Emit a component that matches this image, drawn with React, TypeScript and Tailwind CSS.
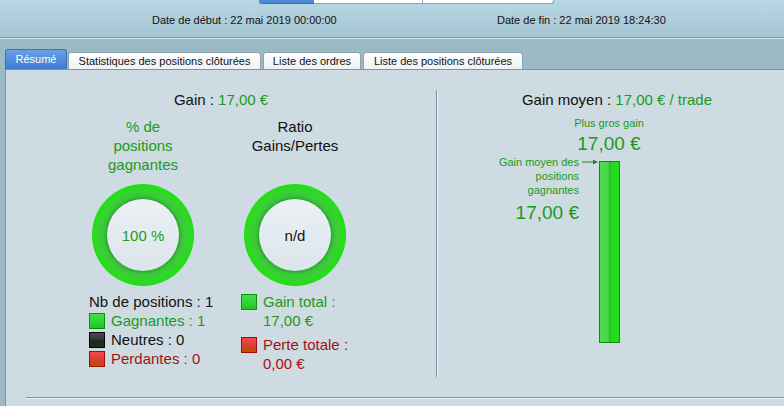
import type { ReactNode } from "react";

const green = "text-[#1a9a1a]";
const red = "text-[#a31212]";

function Swatch({ tone }: { tone: "green" | "black" | "red" }) {
  const styles = {
    green: "border-[#0c930c] bg-[linear-gradient(#46de46_0%,#32d232_55%,#22c222_100%)]",
    black: "border-[#050505] bg-[linear-gradient(#4a4a4a_0%,#333_50%,#1d2d1d_55%,#1a331a_100%)]",
    red: "border-[#a00c0c] bg-[linear-gradient(#f04a4a_0%,#e23c3c_50%,#cf4418_55%,#c8480c_100%)]",
  };
  return <span className={`block h-[16px] w-[16px] shrink-0 border ${styles[tone]}`} />;
}

function Ring({ children }: { children: ReactNode }) {
  return (
    <div className="mx-auto flex h-[102px] w-[102px] items-center justify-center rounded-full bg-[radial-gradient(circle_closest-side,#30b630_70%,#3cc63c_78%,#34d52e_88%,#20e012_100%)]">
      <div className="flex h-[72px] w-[72px] items-center justify-center rounded-full bg-[linear-gradient(#ebf1f5,#dce5eb)] text-[15px] shadow-[0_0_3px_rgba(0,70,0,0.4)]">
        {children}
      </div>
    </div>
  );
}

export default function App() {
  return (
    <div className="flex h-[406px] w-[784px] flex-col overflow-hidden bg-[#9cbac6] font-['Liberation_Sans',Arial,sans-serif] text-[#111]">
      {/* top bar with dates */}
      <div className="h-[37px] shrink-0 bg-[linear-gradient(#b9d8e5,#a5c4d1)]">
        <div className="ml-[259px] flex h-[4px]">
          <div className="w-[55px] rounded-bl-[3px] border-b border-[#3a6fb6] bg-[#4a88da]" />
          <div className="w-[109px] border-b border-r border-[#8ea3ae] bg-white" />
          <div className="w-[131px] rounded-br-[3px] border-b border-r border-[#8ea3ae] bg-white" />
        </div>
        <div className="mt-[10px] flex text-[11px] leading-[13px]">
          <span className="ml-[152px] w-[345px]">Date de début : 22 mai 2019 00:00:00</span>
          <span>Date de fin : 22 mai 2019 18:24:30</span>
        </div>
      </div>
      <div className="h-[1px] shrink-0 bg-[#7f9aa7]" />
      <div className="h-[1px] shrink-0 bg-[#d6e6ed]" />

      {/* tabs */}
      <div className="flex h-[30px] shrink-0 items-end gap-[1px] pl-[5px] text-[11px]">
        <div className="flex h-[20px] w-[62px] items-center justify-center rounded-t-[3px] border border-b-0 border-[#3b70b9] bg-[linear-gradient(#6aa0e4,#3d7bd3)] text-white">
          Résumé
        </div>
        <div className="flex h-[17px] w-[193px] items-center justify-center rounded-t-[3px] border border-b-0 border-[#8ea5b1] bg-[linear-gradient(#ffffff,#eef2f4)]">
          Statistiques des positions clôturées
        </div>
        <div className="ml-[1px] flex h-[17px] w-[98px] items-center justify-center rounded-t-[3px] border border-b-0 border-[#8ea5b1] bg-[linear-gradient(#ffffff,#eef2f4)]">
          Liste des ordres
        </div>
        <div className="ml-[1px] flex h-[17px] w-[160px] items-center justify-center rounded-t-[3px] border border-b-0 border-[#8ea5b1] bg-[linear-gradient(#ffffff,#eef2f4)]">
          Liste des positions clôturées
        </div>
      </div>

      {/* content panel */}
      <div className="ml-[5px] flex flex-1 flex-col border-l border-t border-[#7a95a3] bg-[#cedbe2]">
        <div className="flex h-[327px] shrink-0">
          {/* left section */}
          <div className="w-[430px] pt-[21px]">
            <div className="text-center text-[15px] leading-[18px]">
              Gain : <span className={green}>17,00 €</span>
            </div>
            <div className="ml-[61px] mt-[8px] flex text-[15px] leading-[19px]">
              <div className="w-[152px]">
                <div className={`h-[57px] text-center ${green}`}>
                  % de
                  <br />
                  positions
                  <br />
                  gagnantes
                </div>
                <div className="mt-[10px]">
                  <Ring>
                    <span className={green}>100 %</span>
                  </Ring>
                </div>
                <div className="mt-[6px] pl-[22px]">
                  <div>Nb de positions : 1</div>
                  <div className="flex items-center gap-[6px]">
                    <Swatch tone="green" />
                    <span className={green}>Gagnantes : 1</span>
                  </div>
                  <div className="flex items-center gap-[6px]">
                    <Swatch tone="black" />
                    <span>Neutres : 0</span>
                  </div>
                  <div className="flex items-center gap-[6px]">
                    <Swatch tone="red" />
                    <span className={red}>Perdantes : 0</span>
                  </div>
                </div>
              </div>

              <div className="w-[152px]">
                <div className="h-[57px] text-center">
                  Ratio
                  <br />
                  Gains/Pertes
                </div>
                <div className="mt-[10px]">
                  <Ring>n/d</Ring>
                </div>
                <div className="mt-[6px] pl-[22px]">
                  <div className="flex items-center gap-[6px]">
                    <Swatch tone="green" />
                    <span className={green}>Gain total :</span>
                  </div>
                  <div className={`pl-[22px] ${green}`}>17,00 €</div>
                  <div className="mt-[5px] flex items-center gap-[6px]">
                    <Swatch tone="red" />
                    <span className={red}>Perte totale :</span>
                  </div>
                  <div className={`pl-[22px] ${red}`}>0,00 €</div>
                </div>
              </div>
            </div>
          </div>

          {/* divider */}
          <div className="mt-[20px] h-[287px] w-[1px] bg-[#7a929f]" />
          <div className="mt-[20px] h-[287px] w-[1px] bg-[#eef5f8]" />

          {/* right section */}
          <div className="flex-1 pt-[21px]">
            <div className="pl-[12px] text-center text-[15px] leading-[18px]">
              Gain moyen : <span className={green}>17,00 € / trade</span>
            </div>
            <div className={`ml-[121px] w-[100px] text-center ${green}`}>
              <div className="mt-[8px] text-[11px] leading-[13px]">Plus gros gain</div>
              <div className="mt-[3px] text-[19px] leading-[22px]">17,00 €</div>
            </div>
            <div className="ml-[60px] flex">
              <div className={`w-[81px] text-right ${green}`}>
                <div className="text-[11px] leading-[14px]">
                  Gain moyen des
                  <br />
                  positions
                  <br />
                  gagnantes
                </div>
                <div className="mt-[5px] text-[19px] leading-[22px]">17,00 €</div>
              </div>
              <svg className="mt-[3px]" width="20" height="8" viewBox="0 0 20 8">
                <line x1="3" y1="4" x2="16" y2="4" stroke="#1a8f1a" strokeWidth="1" />
                <polygon points="14,1.5 19,4 14,6.5" fill="#1a8f1a" />
              </svg>
              <div className="mt-[6px] h-[182px] w-[21px] border border-[#0b8f0b] bg-[linear-gradient(90deg,#50dc50_0%,#46d746_42%,#2dbd2d_50%,#26d226_60%,#1ee414_100%)]" />
            </div>
          </div>
        </div>
        <div className="ml-[20px] h-[1px] bg-[#7a929f]" />
        <div className="ml-[20px] h-[1px] bg-[#eef5f8]" />
      </div>
    </div>
  );
}
